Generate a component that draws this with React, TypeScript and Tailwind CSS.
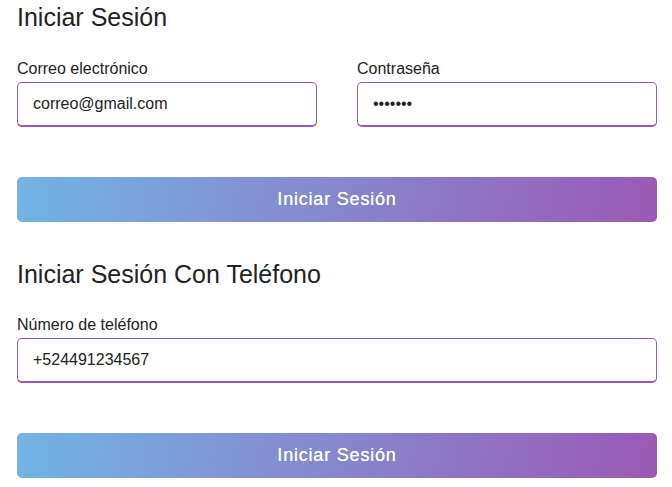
import React from "react";

const inputCls =
  "block w-full h-[45px] rounded-[5px] border border-b-2 border-[#9b59b6] bg-white px-[15px] text-[16px] text-[#222] outline-none";

const btnCls =
  "block w-full h-[45px] rounded-[5px] bg-[linear-gradient(100deg,#72b4e4,#9b59b6)] text-white text-[18px] tracking-[0.8px] [text-shadow:0_0_0.4px_#fff]";

export default function App() {
  return (
    <div className="w-[672px] h-[487px] bg-white overflow-hidden font-['Liberation_Sans',Arial,sans-serif] text-[#222]">
      <div className="ml-[17px] w-[640px] flex flex-col pt-[2px]">
        <h1 className="text-[25px] leading-[30px] h-[30px] text-[#222]">Iniciar Sesión</h1>
        <div className="mt-[28px] grid grid-cols-2 gap-x-[40px]">
          <div className="flex flex-col">
            <label className="text-[16px] leading-[18px] text-[#222]">Correo electrónico</label>
            <input className={inputCls + " mt-[4px]"} readOnly defaultValue="correo@gmail.com" />
          </div>
          <div className="flex flex-col">
            <label className="text-[16px] leading-[18px] text-[#222]">Contraseña</label>
            <input className={inputCls + " mt-[4px]"} type="password" readOnly defaultValue="1234567" />
          </div>
        </div>
        <button className={btnCls + " mt-[50px]"}>Iniciar Sesión</button>
        <h2 className="mt-[37px] text-[25px] leading-[30px] h-[30px] text-[#222]">Iniciar Sesión Con Teléfono</h2>
        <label className="mt-[27px] text-[16px] leading-[18px] text-[#222]">Número de teléfono</label>
        <input className={inputCls + " mt-[4px]"} readOnly defaultValue="+524491234567" />
        <button className={btnCls + " mt-[50px]"}>Iniciar Sesión</button>
      </div>
    </div>
  );
}
